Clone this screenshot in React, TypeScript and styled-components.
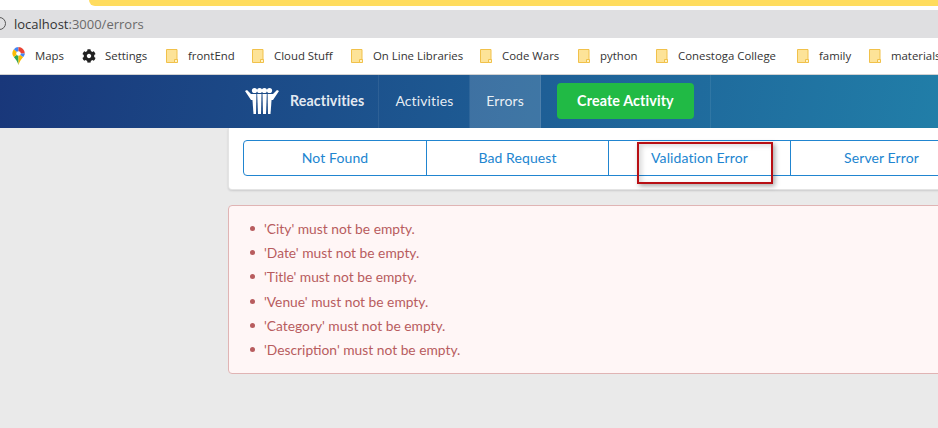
import { FaCog } from "react-icons/fa"
import styled, { createGlobalStyle } from "styled-components"

const GlobalStyle = createGlobalStyle`
   html, body {
      margin: 0;
      padding: 0;
      overflow: hidden;
      background: #eaeaea;
   }
`

const Shell = styled.div`
   position: relative;
   width: 938px;
   height: 428px;
   overflow: hidden;
   background: #eaeaea;
   font-family: Lato, "Open Sans", sans-serif;
`

const TopStrip = styled.div`
   height: 10px;
   padding-left: 89px;
   background: #fff;
`

const Notice = styled.div`
   height: 6px;
   background: #ffdc5e;
   border-bottom-left-radius: 6px;
`

const UrlBar = styled.div`
   display: flex;
   align-items: center;
   gap: 8px;
   box-sizing: border-box;
   height: 28px;
   margin-left: -7px;
   padding-bottom: 1px;
   font-family: "Open Sans", sans-serif;
   font-size: 13px;
   background: #dfdfe1;
`

const UrlRing = styled.span`
   width: 11px;
   height: 11px;
   border: 1.5px solid #555;
   border-radius: 50%;
`

const UrlHost = styled.span`
   color: #333;
`

const UrlPath = styled.span`
   color: #6a6a6a;
`

const BookmarkBar = styled.div`
   display: flex;
   align-items: center;
   box-sizing: border-box;
   height: 37px;
   padding: 0 0 1px 12px;
   white-space: nowrap;
   background: #fff;
   border-bottom: 1px solid #d2d2d2;
`

const Bookmark = styled.div<{ $width: number; $gap?: number }>`
   display: flex;
   align-items: center;
   flex-shrink: 0;
   gap: ${(p) => p.$gap ?? 10}px;
   width: ${(p) => p.$width}px;
   font-family: "Open Sans", sans-serif;
   font-size: 11.4px;
   color: #333;
`

const Nav = styled.nav`
   display: flex;
   align-items: stretch;
   height: 53px;
   padding-left: 229px;
   background: linear-gradient(100deg, #19377a 0%, #1e5f96 58%, #217ea8 100%);
`

const NavItem = styled.div<{ $active?: boolean }>`
   display: flex;
   align-items: center;
   padding: 0 16px 3px;
   font-size: 14px;
   letter-spacing: 0.12px;
   color: rgba(255, 255, 255, 0.9);
   background: ${(p) => (p.$active ? "rgba(255, 255, 255, 0.15)" : "transparent")};
   border-right: 1px solid rgba(255, 255, 255, 0.08);
`

const Brand = styled(NavItem)`
   gap: 11px;
   padding-right: 14px;
   font-size: 14.2px;
   font-weight: 700;
`

const LogoMark = styled.svg`
   margin-top: 2px;
`

const CreateButton = styled.div`
   display: flex;
   align-items: center;
   justify-content: center;
   box-sizing: border-box;
   width: 137px;
   height: 36px;
   margin-top: 2px;
   padding-bottom: 2px;
   font-size: 14.3px;
   font-weight: 700;
   color: #fff;
   background: #21ba45;
   border-radius: 4px;
`

const Content = styled.main`
   display: flex;
   flex-direction: column;
   gap: 15px;
   width: 760px;
   margin-left: 228px;
`

const Segment = styled.section`
   box-sizing: border-box;
   height: 62px;
   padding: 12px 14px;
   background: #fff;
   border: 1px solid rgba(34, 36, 38, 0.12);
   border-top: 0;
   border-radius: 0 0 4px 4px;
   box-shadow: 0 1px 2px rgba(34, 36, 38, 0.15);
`

const ButtonGroup = styled.div`
   display: grid;
   grid-template-columns: repeat(4, 1fr);
   box-sizing: border-box;
   height: 36px;
   border: 1px solid #2185d0;
   border-radius: 4px;
`

const ErrorButton = styled.div`
   display: flex;
   align-items: center;
   justify-content: center;
   padding-bottom: 2px;
   font-size: 14px;
   letter-spacing: 0.1px;
   color: #2185d0;
   & + & {
      border-left: 1px solid #2185d0;
   }
`

const ErrorBox = styled.section`
   box-sizing: border-box;
   height: 169px;
   padding: 12px 0 0 35px;
   background: #fff6f6;
   border: 1px solid #e0b4b4;
   border-radius: 4px;
`

const ErrorList = styled.ul`
   margin: 0;
   padding: 0;
   list-style: none;
`

const ErrorLine = styled.li`
   position: relative;
   height: 24.2px;
   line-height: 22px;
   font-size: 13.8px;
   color: #b85c5e;
   &::before {
      content: "";
      position: absolute;
      left: -14px;
      top: 8px;
      width: 5px;
      height: 5px;
      border-radius: 50%;
      background: #b85c5e;
   }
`

const Annotation = styled.div`
   position: absolute;
   left: 637px;
   top: 142px;
   box-sizing: border-box;
   width: 136px;
   height: 42px;
   border: 2px solid #b80f14;
   box-shadow: 2px 2px 5px rgba(0, 0, 0, 0.35), inset 3px 2px 5px rgba(0, 0, 0, 0.14);
`

function FolderIcon() {
   return (
      <svg width="12" height="14" viewBox="0 0 12 14">
         <path d="M.5.5h10.5v13H.5z" fill="#fde398" stroke="#f1c14a" />
         <path d="M8.5 10.5h3v3h-3z" fill="#fff3c8" stroke="#f1c14a" />
      </svg>
   )
}

function MapsIcon() {
   return (
      <svg width="13" height="18" viewBox="0 0 13 18">
         <path d="M6.5 18C5.6 14.6 3.6 12.4 1.8 10L6.5 6.5z" fill="#34a853" />
         <path d="M6.5 18c.9-3.4 2.9-5.6 4.7-8L6.5 6.5z" fill="#fbbc04" />
         <path d="M1.8 10A6.3 6.3 0 0 1 1.9 2.2L6.5 6.5z" fill="#fbbc04" />
         <path d="M1.9 2.2A6.4 6.4 0 0 1 6.5 0V6.5z" fill="#4285f4" />
         <path d="M6.5 0a6.4 6.4 0 0 1 6.3 6.5H6.5z" fill="#ea4335" />
         <path d="M12.8 6.5c0 1.3-.7 2.4-1.6 3.5L6.5 6.5z" fill="#4285f4" />
         <circle cx="6.5" cy="6.5" r="2.3" fill="#fff" />
      </svg>
   )
}

function LogoIcon() {
   return (
      <LogoMark width="34" height="28" viewBox="0 0 34 28" fill="#fff">
         <path d="M0 4l2-1 4 4h2v6H6z" />
         <path d="M34 4l-2-1-4 4h-2v6h2z" />
         <circle cx="9.5" cy="3.5" r="2.6" />
         <circle cx="14.6" cy="3.5" r="2.6" />
         <circle cx="19.4" cy="3.5" r="2.6" />
         <circle cx="24.5" cy="3.5" r="2.6" />
         <path d="M7 7h4.4l-.4 20H8.5z" />
         <path d="M12.2 7h4.3l-.5 20h-3z" />
         <path d="M17.5 7h4.3l-.8 20h-3z" />
         <path d="M22.6 7H27l-1.5 20H23z" />
      </LogoMark>
   )
}

const bookmarks = [
   { label: "frontEnd", width: 86 },
   { label: "Cloud Stuff", width: 99 },
   { label: "On Line Libraries", width: 129 },
   { label: "Code Wars", width: 98 },
   { label: "python", width: 78 },
   { label: "Conestoga College", width: 141 },
   { label: "family", width: 72 },
   { label: "materials", width: 80 },
]

const errorButtons = ["Not Found", "Bad Request", "Validation Error", "Server Error"]

const errors = [
   "'City' must not be empty.",
   "'Date' must not be empty.",
   "'Title' must not be empty.",
   "'Venue' must not be empty.",
   "'Category' must not be empty.",
   "'Description' must not be empty.",
]

export default function App() {
   return (
      <Shell>
         <GlobalStyle />
         <TopStrip>
            <Notice />
         </TopStrip>
         <UrlBar>
            <UrlRing />
            <span>
               <UrlHost>localhost</UrlHost>
               <UrlPath>:3000/errors</UrlPath>
            </span>
         </UrlBar>
         <BookmarkBar>
            <Bookmark $width={70}>
               <MapsIcon />
               Maps
            </Bookmark>
            <Bookmark $width={84} $gap={9}>
               <FaCog size={14} color="#222" />
               Settings
            </Bookmark>
            {bookmarks.map((b) => (
               <Bookmark key={b.label} $width={b.width}>
                  <FolderIcon />
                  {b.label}
               </Bookmark>
            ))}
         </BookmarkBar>
         <Nav>
            <Brand>
               <LogoIcon />
               Reactivities
            </Brand>
            <NavItem>Activities</NavItem>
            <NavItem $active>Errors</NavItem>
            <NavItem>
               <CreateButton>Create Activity</CreateButton>
            </NavItem>
         </Nav>
         <Content>
            <Segment>
               <ButtonGroup>
                  {errorButtons.map((label) => (
                     <ErrorButton key={label}>{label}</ErrorButton>
                  ))}
               </ButtonGroup>
            </Segment>
            <ErrorBox>
               <ErrorList>
                  {errors.map((line) => (
                     <ErrorLine key={line}>{line}</ErrorLine>
                  ))}
               </ErrorList>
            </ErrorBox>
         </Content>
         <Annotation />
      </Shell>
   )
}
